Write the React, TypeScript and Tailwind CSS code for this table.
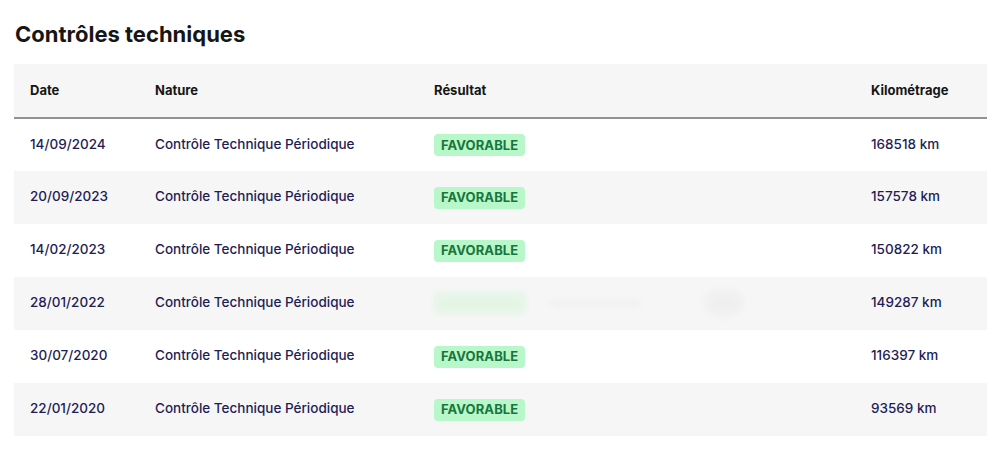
const rows = [
  { date: '14/09/2024', km: '168518 km', hidden: false },
  { date: '20/09/2023', km: '157578 km', hidden: false },
  { date: '14/02/2023', km: '150822 km', hidden: false },
  { date: '28/01/2022', km: '149287 km', hidden: true },
  { date: '30/07/2020', km: '116397 km', hidden: false },
  { date: '22/01/2020', km: '93569 km', hidden: false },
];

function Badge({ hidden }: { hidden: boolean }) {
  if (hidden) {
    // blurred out in the original capture
    return (
      <div className="flex items-center gap-6 blur-[3px] opacity-60">
        <span className="h-[22px] w-[92px] rounded bg-[#d9f5dc]" />
        <span className="h-[4px] w-[90px] bg-[#e6e6e6]" />
        <span className="ml-10 h-[26px] w-[40px] rounded-full bg-[#ececec]" />
      </div>
    );
  }
  return (
    <span className="inline-flex h-[22px] items-center rounded bg-[#b8f7c9] px-[7px] text-[13px] font-bold uppercase tracking-[0.1px] text-[#18753c]">
      Favorable
    </span>
  );
}

export default function App() {
  return (
    <div
      className="h-[461px] w-[1000px] bg-white pl-[14px] pr-[13px] pt-[19px]"
      style={{ fontFamily: 'Inter, "Noto Sans", sans-serif' }}
    >
      <h2 className="mb-[11px] h-[34px] pl-px text-[22px] font-bold leading-[30px] text-[#161616]">
        Contrôles techniques
      </h2>
      <table className="w-full table-fixed border-collapse text-left">
        <colgroup>
          <col className="w-[141px]" />
          <col className="w-[279px]" />
          <col className="w-[437px]" />
          <col />
        </colgroup>
        <thead>
          <tr className="h-[54px] border-b-2 border-[#929292] bg-[#f6f6f6] text-[13px] font-bold text-[#161616]">
            <th className="pl-4 font-bold">Date</th>
            <th className="font-bold">Nature</th>
            <th className="font-bold">Résultat</th>
            <th className="font-bold">Kilométrage</th>
          </tr>
        </thead>
        <tbody>
          {rows.map((r, i) => (
            <tr
              key={r.date}
              className={i % 2 === 1 ? 'h-[53px] bg-[#f6f6f6]' : 'h-[53px] bg-white'}
            >
              <td className="pb-[2px] pl-4 text-[13.5px] font-medium text-[#1e1e55]">{r.date}</td>
              <td className="pb-[2px] text-[13.5px] font-medium text-[#1e1e55]">
                Contrôle Technique Périodique
              </td>
              <td className="pb-[2px]">
                <Badge hidden={r.hidden} />
              </td>
              <td className="pb-[2px] text-[13.5px] font-medium text-[#1e1e55]">{r.km}</td>
            </tr>
          ))}
        </tbody>
      </table>
    </div>
  );
}
